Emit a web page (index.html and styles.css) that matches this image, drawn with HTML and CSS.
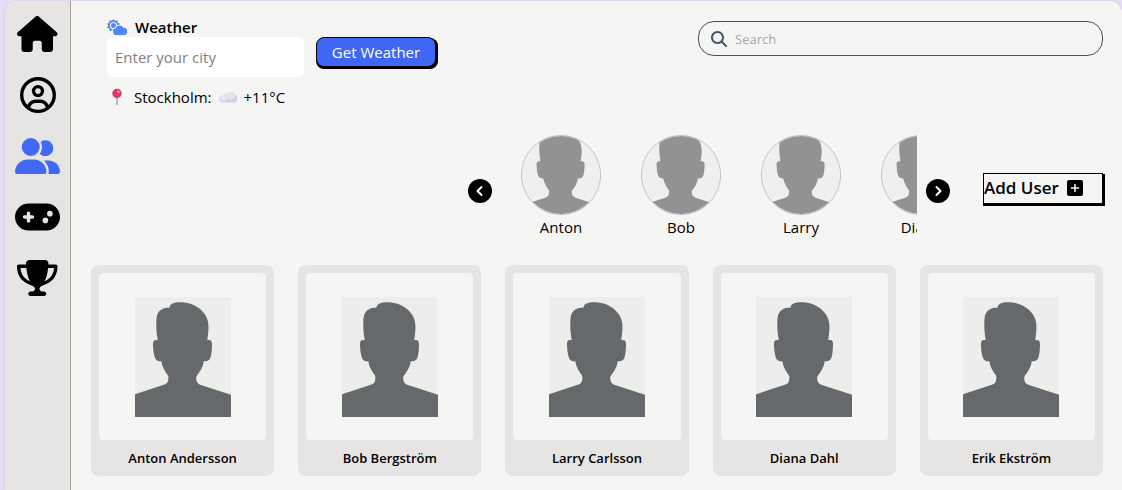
FILE: index.html
```html
<!DOCTYPE html>
<html lang="en">
<head>
<meta charset="utf-8">
<meta name="viewport" content="width=device-width, initial-scale=1">
<title>Users</title>
<link rel="stylesheet" href="styles.css">
</head>
<body>
<svg class="sprite" aria-hidden="true">
  <symbol id="avatar" viewBox="0 0 96 120" preserveAspectRatio="xMidYMid slice">
    <rect width="96" height="120" fill="#ededeb"/>
    <path fill="#66696b" d="M22.7 43.3C22 38 21.300 34 21.300 29C21.300 24 21.300 20 22.500 17C25 12 29 10.500 34.500 10.700C34.500 8 37 5.300 45 5.300C53 5.300 60 8 65 12C71 17 73.500 23 73.500 30C73.500 35 72.700 39 72.300 43.300C76 42.500 77.200 44.500 77 48C76.800 54 76.500 57 75.500 60.500C74.700 63.500 72 64.300 68.700 64.300C68 71 64 76 61.300 79.500C61 84 62 86.500 66 88L96 97.700V120H0V97.300L29.500 87.600C32.500 86.500 33.700 84 33.300 79C30 74.500 27 70 26.300 64.300C23 64.500 21 63.500 20 61C18.500 57 18 51 18 47C18 43.500 19.500 42.500 22.700 43.300Z"/>
  </symbol>
</svg>
<div class="app">
  <nav class="sidebar" aria-label="Main">
    <a href="#home" aria-label="Home"><svg viewBox="0 0 576 512"><path d="M575.8 255.5c0 18-15 32.1-32 32.1h-32l.7 160.2c0 2.700-.2 5.400-.5 8.100V472c0 22.100-17.900 40-40 40H392c-22.100 0-40-17.900-40-40V384c0-17.700-14.300-32-32-32H256c-17.700 0-32 14.300-32 32v88c0 22.100-17.900 40-40 40H104c-22.100 0-40-17.900-40-40V287.600H32c-18 0-32-14-32-32.100c0-9 3-17 10-24L266.400 8c7-7 15-8 22-8s15 2 21 7L564.800 231.500c8 7 12 15 11 24z"/></svg></a>
    <a href="#profile" aria-label="Profile"><svg viewBox="0 0 512 512"><path fill-rule="evenodd" d="M406.5 399.6C387.4 352.9 341.5 320 288 320H224c-53.5 0-99.400 32.900-118.500 79.600C69.900 362.200 48 311.700 48 256C48 141.100 141.100 48 256 48s208 93.100 208 208c0 55.700-21.900 106.200-57.500 143.600zm-40.100 32.700C334.400 452.400 296.600 464 256 464s-78.400-11.600-110.500-31.700c7.300-36.700 39.700-64.300 78.500-64.300h64c38.800 0 71.200 27.600 78.500 64.300zM256 512A256 256 0 1 0 256 0a256 256 0 1 0 0 512zm0-272a40 40 0 1 1 0-80 40 40 0 1 1 0 80zm-88-40a88 88 0 1 0 176 0 88 88 0 1 0 -176 0z"/></svg></a>
    <a href="#users" class="active" aria-label="Users" aria-current="page"><svg viewBox="0 0 640 512"><path d="M96 128a128 128 0 1 1 256 0A128 128 0 1 1 96 128zM0 482.300C0 383.800 79.800 304 178.300 304h91.400C368.200 304 448 383.800 448 482.300c0 16.400-13.300 29.700-29.700 29.700H29.700C13.300 512 0 498.700 0 482.300zM609.300 512H471.400c5.400-9.400 8.600-20.300 8.600-32v-8c0-60.700-27.100-115.200-69.800-151.800c2.400-.1 4.700-.2 7.100-.2h61.400C567.800 320 640 392.200 640 481.300c0 17-13.800 30.700-30.700 30.700zM432 256c-31 0-59-12.600-79.300-32.900C372.400 196.500 384 163.600 384 128c0-26.800-6.600-52.100-18.300-74.300C384.300 40.100 407.200 32 432 32c61.900 0 112 50.100 112 112s-50.100 112-112 112z"/></svg></a>
    <a href="#games" aria-label="Games"><svg viewBox="0 0 640 512"><path fill-rule="evenodd" d="M192 64C86 64 0 150 0 256S86 448 192 448H448c106 0 192-86 192-192s-86-192-192-192H192zM496 168a40 40 0 1 1 0 80 40 40 0 1 1 0-80zM392 304a40 40 0 1 1 80 0 40 40 0 1 1 -80 0zM168 200c0-13.300 10.700-24 24-24s24 10.700 24 24v32h32c13.300 0 24 10.700 24 24s-10.700 24-24 24H216v32c0 13.300-10.700 24-24 24s-24-10.700-24-24V280H136c-13.300 0-24-10.700-24-24s10.700-24 24-24h32V200z"/></svg></a>
    <a href="#trophies" aria-label="Trophies"><svg viewBox="0 0 576 512"><path fill-rule="evenodd" d="M400 0H176c-26.500 0-48.100 21.800-47.100 48.200c.2 5.300 .4 10.600 .7 15.800H24C10.700 64 0 74.700 0 88c0 92.600 33.500 157 78.500 200.700c44.300 43.100 98.300 64.800 138.100 75.800c23.400 6.500 39.400 26 39.400 45.600c0 20.900-17 37.900-37.900 37.900H192c-17.700 0-32 14.300-32 32s14.300 32 32 32H384c17.700 0 32-14.300 32-32s-14.300-32-32-32H357.900C337 448 320 431 320 410.100c0-19.600 15.900-39.200 39.400-45.600c39.900-11 93.900-32.700 138.200-75.800C542.500 245 576 180.600 576 88c0-13.300-10.700-24-24-24H446.400c.3-5.200 .5-10.400 .7-15.800C448.100 21.800 426.500 0 400 0zM48.900 112h84.400c9.100 90.100 29.200 150.300 51.900 190.600c-24.900-11-50.800-26.500-73.200-48.300c-32-31.100-58-76-63-142.300zM464.100 254.300c-22.400 21.800-48.300 37.300-73.200 48.300c22.700-40.300 42.800-100.500 51.900-190.600h84.400c-5.100 66.300-31.100 111.200-63 142.300z"/></svg></a>
  </nav>
  <main class="main">
    <header class="top">
      <section class="weather">
        <h2><svg class="weather-icon" viewBox="0 0 20 16" aria-hidden="true"><path fill="currentColor" fill-rule="evenodd" d="M6.500 0L8 1.800L10.500 1.200L10.700 3.700L13 4.700L11.800 6.700L13 8.800L10.700 9.500L10.500 12L8 11.400L6.500 13.300L5 11.400L2.500 12L2.300 9.500L0 8.600L1.300 6.600L0 4.700L2.300 3.700L2.500 1.200L5 1.800ZM6.500 3A3.600 3.600 0 1 0 6.500 10.200A3.600 3.600 0 1 0 6.500 3Z"/><circle cx="6.500" cy="6.600" r="2.500" fill="currentColor"/><path d="M9.500 16a3.500 3.500 0 0 1-.8-6.900A4.200 4.200 0 0 1 16.300 8.800a3.600 3.600 0 0 1 .7 7.200z" fill="currentColor" stroke="#f5f5f4" stroke-width="1.600" paint-order="stroke"/></svg>Weather</h2>
        <form class="weather-form">
          <input type="text" placeholder="Enter your city" aria-label="City">
          <button type="button" class="get">Get Weather</button>
        </form>
        <p class="report">
          <svg class="pin" viewBox="0 0 20 18" aria-hidden="true"><path d="M10 8V17" stroke="#a09aa8" stroke-width="1.400"/><circle cx="10" cy="5.500" r="4.700" fill="#d83d67"/><circle cx="11.300" cy="3.800" r="1.300" fill="#f391ad"/></svg>
          <span>Stockholm:</span>
          <svg class="cloud" viewBox="0 0 18 14" aria-hidden="true"><path d="M4 12.500A3.500 3.500 0 0 1 4 5.500A3.500 3.500 0 0 1 8 4A4.300 4.300 0 0 1 16 5A3.800 3.800 0 0 1 14 12.500Z" fill="#d6d0e5"/><circle cx="12" cy="5.800" r="4" fill="#e5e2ec"/><circle cx="5.200" cy="7.500" r="3.200" fill="#e8e5ef"/></svg>
          <span>+11°C</span>
        </p>
      </section>
      <label class="search">
        <svg viewBox="0 0 512 512" aria-hidden="true"><path fill-rule="evenodd" d="M416 208c0 45.900-14.900 88.300-40 122.700L502.600 457.400c12.500 12.500 12.500 32.800 0 45.300s-32.800 12.500-45.300 0L330.700 376c-34.400 25.200-76.800 40-122.700 40C93.100 416 0 322.900 0 208S93.100 0 208 0S416 93.100 416 208zM208 352a144 144 0 1 0 0-288 144 144 0 1 0 0 288z"/></svg>
        <input type="search" placeholder="Search" aria-label="Search">
      </label>
    </header>
    <section class="people">
      <button type="button" class="arrow" aria-label="Previous"><svg viewBox="0 0 24 24"><circle cx="12" cy="12" r="12"/><path d="M13.500 8L9.500 12L13.500 16"/></svg></button>
      <div class="carousel">
        <figure><svg><use href="#avatar"/></svg><figcaption>Anton</figcaption></figure>
        <figure><svg><use href="#avatar"/></svg><figcaption>Bob</figcaption></figure>
        <figure><svg><use href="#avatar"/></svg><figcaption>Larry</figcaption></figure>
        <figure><svg><use href="#avatar"/></svg><figcaption>Diana</figcaption></figure>
      </div>
      <button type="button" class="arrow" aria-label="Next"><svg viewBox="0 0 24 24"><circle cx="12" cy="12" r="12"/><path d="M10.500 8L14.500 12L10.500 16"/></svg></button>
      <button type="button" class="add">Add User<svg viewBox="0 0 16 16" aria-hidden="true"><rect width="16" height="16" rx="2"/><path d="M8 4.500V11.500M4.500 8H11.500" stroke="#f5f5f4" stroke-width="1.600" stroke-linecap="round"/></svg></button>
    </section>
    <section class="grid">
      <article class="card"><div class="photo"><svg><use href="#avatar"/></svg></div><h3>Anton Andersson</h3></article>
      <article class="card"><div class="photo"><svg><use href="#avatar"/></svg></div><h3>Bob Bergström</h3></article>
      <article class="card"><div class="photo"><svg><use href="#avatar"/></svg></div><h3>Larry Carlsson</h3></article>
      <article class="card"><div class="photo"><svg><use href="#avatar"/></svg></div><h3>Diana Dahl</h3></article>
      <article class="card"><div class="photo"><svg><use href="#avatar"/></svg></div><h3>Erik Ekström</h3></article>
    </section>
  </main>
</div>
</body>
</html>
```

FILE: styles.css
```css
* { box-sizing: border-box; }
body {
  margin: 0;
  padding: 1px 0 0 5px;
  background: #e6def3;
  color: #000;
  font: 15px/24px "Segoe UI", "Open Sans", "Noto Sans", sans-serif;
}
h2, h3, p, figure { margin: 0; }
button, input { font: inherit; color: inherit; }
button { cursor: pointer; }
.sprite { display: none; }
.app {
  display: flex;
  min-height: calc(100vh - 1px);
  overflow: hidden;
  border-radius: 12px 12px 0 0;
  background: #f5f5f4;
  box-shadow: 0 0 3px #cfc3e2;
}
.sidebar {
  flex: none;
  display: flex;
  flex-direction: column;
  align-items: center;
  gap: 25px;
  width: 66px;
  padding-top: 15px;
  background: #e7e5e4;
  border-right: 1px solid #a8a09e;
}
.sidebar a { display: block; height: 36px; color: #000; }
.sidebar a.active { color: #4169f5; }
.sidebar svg { display: block; height: 36px; fill: currentColor; }
.main { flex: 1; min-width: 0; padding: 15px 19px 14px 20px; }
.top {
  display: flex;
  justify-content: space-between;
  align-items: flex-start;
  gap: 24px;
}
.weather { padding-left: 16px; }
.weather h2 {
  display: flex;
  align-items: center;
  gap: 8px;
  height: 21px;
  font-size: 15px;
  font-weight: 600;
}
.weather-icon { width: 20px; height: 16px; color: #4f86fb; }
.weather-form { display: flex; align-items: flex-start; gap: 12px; }
.weather-form input {
  width: 197px;
  height: 40px;
  padding: 8px;
  border: 0;
  border-radius: 6px;
  background: #fff;
}
.weather-form input::placeholder { color: #808080; opacity: 1; }
.get {
  height: 30px;
  width: 120px;
  padding: 0;
  border: 1px solid #000;
  border-radius: 8px;
  background: #4067f3;
  box-shadow: 0 2px 0 #000, 2px 1px 0 #000, 2px 2px 0 #000;
  color: #fff;
  line-height: 28px;
}
.report { display: flex; align-items: center; gap: 7px; margin-top: 8px; }
.pin { width: 20px; height: 18px; }
.cloud { width: 18px; height: 14px; }
.search {
  display: flex;
  align-items: center;
  gap: 8px;
  width: 405px;
  height: 35px;
  margin-top: 5px;
  padding: 0 12px;
  border: 1px solid #475060;
  border-radius: 16px;
}
.search svg { flex: none; width: 16px; height: 16px; fill: #475569; }
.search input {
  flex: 1;
  min-width: 0;
  padding: 0;
  border: 0;
  outline: 0;
  background: none;
  font-size: 13px;
}
.search input::placeholder { color: #a3a8af; opacity: 1; }
.people {
  display: flex;
  justify-content: flex-end;
  align-items: center;
  margin-top: 26px;
}
.arrow { flex: none; padding: 5px 0 0; border: 0; background: none; }
.arrow svg { display: block; width: 24px; height: 24px; }
.arrow path { fill: none; stroke: #fff; stroke-width: 2; stroke-linecap: round; stroke-linejoin: round; }
.carousel {
  display: flex;
  width: 416px;
  margin: 0 9px;
  overflow: hidden;
}
.carousel figure { flex: 0 0 120px; height: 106px; text-align: center; }
.carousel svg {
  display: block;
  width: 80px;
  height: 80px;
  margin: 0 auto;
  border: 1px solid #a8a29e;
  border-radius: 50%;
  opacity: .7;
}
.add {
  display: flex;
  align-items: center;
  gap: 8px;
  width: 120px;
  height: 31px;
  margin-left: 33px;
  padding: 0;
  border: 1px solid #000;
  background: #f5f5f4;
  box-shadow: 0 2px 0 #000, 2px 1px 0 #000, 2px 2px 0 #000;
  font-size: 17px;
  font-weight: 600;
}
.add svg { width: 16px; height: 16px; }
.grid {
  display: grid;
  grid-template-columns: repeat(5, 1fr);
  gap: 24px;
  margin-top: 24px;
}
.card { padding: 8px 8px 6px; border-radius: 8px; background: #e7e5e4; }
.photo {
  display: flex;
  align-items: center;
  justify-content: center;
  aspect-ratio: 1;
  border-radius: 4px;
  background: #f5f5f4;
}
.photo svg { width: 96px; height: 120px; }
.card h3 { padding-top: 6px; font-size: 13px; font-weight: 600; text-align: center; }
```
